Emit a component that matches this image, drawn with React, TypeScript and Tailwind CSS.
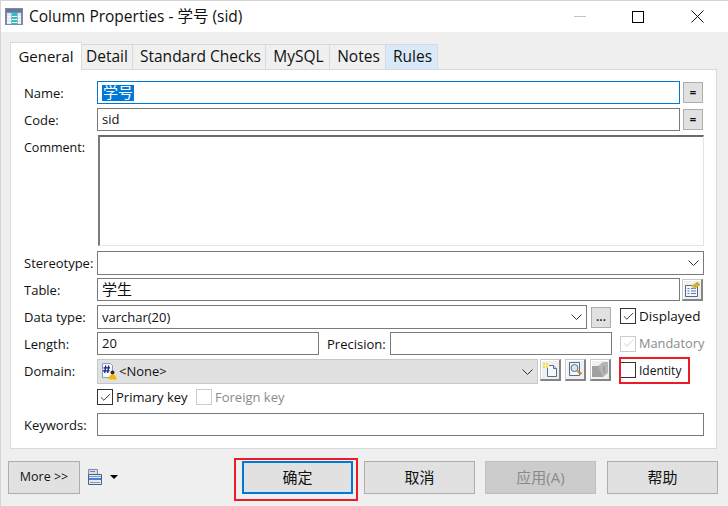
import type { ReactNode } from 'react'
import { Check } from 'lucide-react'

const tabs = [
  { label: 'Detail', w: 'w-[51px]', bg: 'bg-[#f0f0f0]', pad: '' },
  { label: 'Standard Checks', w: 'w-[133px]', bg: 'bg-[#f0f0f0]', pad: 'pl-[3px]' },
  { label: 'MySQL', w: 'w-[64px]', bg: 'bg-[#f0f0f0]', pad: 'pl-[2px]' },
  { label: 'Notes', w: 'w-[56px]', bg: 'bg-[#f0f0f0]', pad: 'pl-[2px]' },
  { label: 'Rules', w: 'w-[52px]', bg: 'bg-[#d8e9f9]', pad: 'pl-[2px]' },
]

function Chevron() {
  return (
    <svg width="11" height="6" viewBox="0 0 11 6" className="shrink-0">
      <path d="M0.500 0.500l5 5 5-5" fill="none" stroke="#333" />
    </svg>
  )
}

function Row({ label, top, h, children }: { label: string; top: string; h: string; children: ReactNode }) {
  return (
    <div className={`flex items-center ${top} ${h}`}>
      <div className={`w-[73px] shrink-0 text-[13px] text-[#111] ${h === 'h-[23px]' ? 'pt-[2px]' : ''}`}>{label}</div>
      {children}
    </div>
  )
}

function Field({ className, children, focused = false }: { className: string; children?: ReactNode; focused?: boolean }) {
  return (
    <div
      className={`flex items-center border bg-white pl-[4px] text-[13px] text-[#111] ${
        focused ? 'border-[#0078d7]' : 'border-[#7a7a7a]'
      } ${className}`}
    >
      {children}
    </div>
  )
}

function SmallButton({ children, className = '' }: { children: ReactNode; className?: string }) {
  return (
    <div className={`flex items-center justify-center border border-[#adadad] bg-[#e1e1e1] text-[12px] font-semibold leading-none text-[#111] ${className}`}>
      {children}
    </div>
  )
}

function ToolButton({ children, className = '' }: { children: ReactNode; className?: string }) {
  return (
    <div
      className={`flex h-[22px] w-[21px] items-center justify-center border-t border-l border-[#c9c9c9] border-r-2 border-b-2 border-r-[#858585] border-b-[#858585] bg-[#f0f0f0] shadow-[inset_1px_1px_0_#ffffff] ${className}`}
    >
      {children}
    </div>
  )
}

function CheckBox({ label, checked = false, disabled = false, className = '', textClass = 'text-[13px]' }: { label: string; checked?: boolean; disabled?: boolean; className?: string; textClass?: string }) {
  return (
    <div className={`flex items-center gap-[3px] ${className}`}>
      <div className={`flex h-[16px] w-[16px] items-center justify-center border bg-white ${disabled ? 'border-[#cccccc]' : 'border-[#333333]'}`}>
        {checked && <Check size={13} strokeWidth={1.6} className={disabled ? 'text-[#cccccc]' : 'text-[#222]'} />}
      </div>
      <span className={`${textClass} ${disabled ? 'text-[#8a8a8a]' : 'text-[#111]'}`}>{label}</span>
    </div>
  )
}

function DialogButton({ children, className = '', variant = 'normal' }: { children: ReactNode; className?: string; variant?: 'normal' | 'disabled' | 'default' }) {
  const look =
    variant === 'disabled'
      ? 'border border-[#bfbfbf] bg-[#cccccc] text-[#8a8a8a]'
      : variant === 'default'
        ? 'border-2 border-[#0078d7] bg-[#e1e1e1] text-[#111]'
        : 'border border-[#adadad] bg-[#e1e1e1] text-[#111]'
  return <div className={`flex h-[33px] items-center justify-center ${look} ${className}`}>{children}</div>
}

function TableIcon() {
  return (
    <svg width="18" height="17" viewBox="0 0 18 17" className="shrink-0">
      <rect x="0" y="0" width="18" height="17" fill="#7d8aa6" />
      <rect x="1" y="1" width="16" height="3" fill="#66769c" />
      <rect x="2" y="5" width="14" height="11" fill="#dfe7f2" />
      <rect x="7" y="5" width="5" height="11" fill="#22c4cc" />
      <path d="M2 8.500h14M2 11.500h14M2 14.500h14" stroke="#ffffff" />
      <path d="M6.500 5v11M12.500 5v11" stroke="#a9b6cc" />
    </svg>
  )
}

function DomainIcon() {
  return (
    <svg width="16" height="17" viewBox="0 0 16 17" className="shrink-0">
      <path d="M1.500 0.500h8l2 2v12h-10z" fill="#f7f9fd" stroke="#8d9bb8" />
      <path d="M4.700 2.500l-1 7.500M7.700 2.500l-1 7.500M2.500 4.800h6.500M2 7.800h6.500" stroke="#14238f" strokeWidth="1.300" fill="none" />
      <circle cx="11.500" cy="9.500" r="2" fill="#2b2b2b" />
      <path d="M7.500 16.500c0-3 1.500-5 4-5s4 2 4 5z" fill="#f6b800" />
    </svg>
  )
}

function PropertiesIcon() {
  return (
    <svg width="17" height="16" viewBox="0 0 17 16">
      <path d="M1.500 4.500h12v11h-12z" fill="#f4f6fa" stroke="#4f6a8f" />
      <path d="M3.500 7.500h2M7 7.500h5M3.500 10h2M7 10h5M3.500 12.500h2M7 12.500h5" stroke="#5b7fb0" />
      <path d="M7 5l6.500-4.500 3 3L10 8z" fill="#e7b93a" />
      <path d="M10 3.500l3 3M12.500 2l2.500 2.500" stroke="#5f9a3a" />
    </svg>
  )
}

function NewIcon() {
  return (
    <svg width="17" height="16" viewBox="0 0 17 16">
      <path d="M5.500 3.500h6l3 3v8h-9z" fill="#f5f8fc" stroke="#55708f" />
      <path d="M11.500 3.500v3h3" fill="#dbe5f0" stroke="#55708f" />
      <rect x="1" y="1" width="5" height="5" fill="#f3d65b" />
      <path d="M3.500 0v7M0 3.500h7" stroke="#fff3b0" />
    </svg>
  )
}

function SearchDocIcon() {
  return (
    <svg width="17" height="17" viewBox="0 0 17 17">
      <path d="M2.500 1.500h10v13h-10z" fill="#f4f7fb" stroke="#55708f" />
      <circle cx="7.500" cy="7" r="3.500" fill="#d9e6f4" stroke="#5c6f85" />
      <path d="M10.500 10l4 3" stroke="#c98a3a" strokeWidth="2.200" />
    </svg>
  )
}

function DisabledDocIcon() {
  return (
    <svg width="16" height="15" viewBox="0 0 16 15">
      <path d="M0 4h11v11H0z" fill="#a0a0a0" />
      <path d="M6 4l5-4h5v11l-5 4z" fill="#b4b4b4" />
      <path d="M11 4h2v7h-2z" fill="#a0a0a0" />
    </svg>
  )
}

function ListIcon() {
  return (
    <svg width="15" height="16" viewBox="0 0 15 16">
      <path d="M0.500 0.500h9v5h-9z" fill="#d9dee8" stroke="#7d8aa6" />
      <path d="M0.500 5.500h13v10h-13z" fill="#e6e9f0" stroke="#4e5f86" />
      <path d="M2 2.500h5" stroke="#6f7f9f" />
      <path d="M1 7.500h12" stroke="#8a98b8" />
      <rect x="1" y="9" width="12" height="2" fill="#4f7ae0" />
      <path d="M2 13.500h10" stroke="#8a98b8" />
    </svg>
  )
}

export default function App() {
  return (
    <div className="flex h-[506px] w-[728px] flex-col overflow-hidden border-l border-t border-[#d4d4d4] bg-[#efefef] font-['Open_Sans','Noto_Sans_CJK_SC',sans-serif] leading-none">
      {/* Title bar */}
      <div className="flex h-[31px] shrink-0 items-center bg-white pl-[4px]">
        <TableIcon />
        <span className="ml-[6px] text-[15.500px] text-[#111]">Column Properties - 学号 (sid)</span>
        <div className="ml-auto flex items-center pr-[12px]">
          <div className="mr-[46px] h-px w-[12px] bg-[#c4c4c4]" />
          <div className="mr-[47px] h-[12px] w-[12px] border border-black" />
          <svg width="13" height="13" viewBox="0 0 13 13" className="mr-[12px]">
            <path d="M0.500 0.500l12 12M12.500 0.500l-12 12" stroke="#111" fill="none" />
          </svg>
        </div>
      </div>

      {/* Tabs */}
      <div className="mt-[10px] flex h-[27px] shrink-0 items-end pl-[9px]">
        <div className="relative z-10 -mb-px flex h-[28px] w-[72px] items-center justify-center border border-b-0 border-[#d9d9d9] bg-white text-[15px] text-[#111]">
          General
        </div>
        {tabs.map((t) => (
          <div key={t.label} className={`flex h-[25px] items-center justify-center border-t border-r border-[#d9d9d9] text-[15.500px] text-[#111] ${t.w} ${t.bg} ${t.pad}`}>
            {t.label}
          </div>
        ))}
      </div>

      {/* General tab panel */}
      <div className="ml-[9px] h-[380px] w-[707px] shrink-0 border border-[#d9d9d9] bg-white pl-[13px] pt-[11px]">
        <Row label="Name:" top="" h="h-[23px]">
          <Field focused className="h-[23px] w-[583px]">
            <span className="flex h-[16px] items-center bg-[#0078d7] px-[1px] text-[15px] text-white">学号</span>
          </Field>
          <SmallButton className="ml-[3px] h-[21px] w-[20px]">=</SmallButton>
        </Row>
        <Row label="Code:" top="mt-[4px]" h="h-[23px]">
          <Field className="h-[23px] w-[583px]">sid</Field>
          <SmallButton className="ml-[3px] h-[21px] w-[20px]">=</SmallButton>
        </Row>
        <div className="mt-[4px] flex h-[111px]">
          <div className="w-[73px] shrink-0 pt-[7px] text-[12.500px] text-[#111]">Comment:</div>
          <div className="ml-px h-[111px] w-[606px] border-2 border-b border-r border-[#e3e3e3] border-l-[#7a7a7a] border-t-[#6a6a6a] bg-white" />
        </div>
        <Row label="Stereotype:" top="mt-[5px]" h="h-[24px]">
          <Field className="h-[24px] w-[607px] justify-end pr-[4px]">
            <Chevron />
          </Field>
        </Row>
        <Row label="Table:" top="mt-[3px]" h="h-[23px]">
          <Field className="h-[23px] w-[583px] text-[15px]">学生</Field>
          <ToolButton className="ml-[2px]">
            <PropertiesIcon />
          </ToolButton>
        </Row>
        <Row label="Data type:" top="mt-[4px]" h="h-[24px]">
          <Field className="h-[24px] w-[490px] justify-between pr-[4px]">
            <span>varchar(20)</span>
            <Chevron />
          </Field>
          <SmallButton className="ml-[4px] h-[21px] w-[20px] items-end pb-[4px]">...</SmallButton>
          <CheckBox checked label="Displayed" className="-mt-[2px] ml-[9px]" textClass="pt-px text-[13.500px]" />
        </Row>
        <Row label="Length:" top="mt-[3px]" h="h-[23px]">
          <Field className="h-[23px] w-[222px]">20</Field>
          <div className="ml-[8px] w-[63px] pt-[2px] text-[13px] text-[#111]">Precision:</div>
          <Field className="h-[23px] w-[222px]" />
          <CheckBox checked disabled label="Mandatory" className="ml-[8px]" textClass="text-[12.800px]" />
        </Row>
        <Row label="Domain:" top="mt-[4px]" h="h-[25px]">
          <div className="flex h-[25px] w-[441px] items-center justify-between border border-[#c8c8c8] bg-[#e1e1e1] pl-[3px] pr-[4px] text-[13px] text-[#111]">
            <span className="flex items-center gap-[2px]">
              <DomainIcon />
              &lt;None&gt;
            </span>
            <Chevron />
          </div>
          <div className="ml-[2px] flex h-[25px] gap-[4px]">
            <ToolButton><NewIcon /></ToolButton>
            <ToolButton><SearchDocIcon /></ToolButton>
            <ToolButton><DisabledDocIcon /></ToolButton>
          </div>
          <div className="relative -mt-[3px] ml-[9px]">
            <CheckBox label="Identity" textClass="pt-px text-[12px]" />
            <div className="absolute -left-[1px] -top-[5px] h-[27px] w-[71px] border-2 border-[#ec1c24]" />
          </div>
        </Row>
        <div className="mt-[5px] flex h-[16px] pl-[73px]">
          <CheckBox checked label="Primary key" className="w-[99px]" />
          <CheckBox disabled label="Foreign key" />
        </div>
        <Row label="Keywords:" top="mt-[8px]" h="h-[23px]">
          <Field className="h-[23px] w-[607px]" />
        </Row>
      </div>

      {/* Bottom buttons */}
      <div className="flex items-start pl-[7px] pt-[12px]">
        <DialogButton className="w-[72px] text-[12.500px]">More &gt;&gt;</DialogButton>
        <div className="ml-[8px] mt-[8px]">
          <ListIcon />
        </div>
        <div className="ml-[7px] mt-[14px] h-0 w-0 border-x-[4px] border-t-[4px] border-x-transparent border-t-black" />
        <div className="relative ml-[124px]">
          <DialogButton variant="default" className="w-[111px] text-[15px]">确定</DialogButton>
          <div className="absolute -left-[8px] -top-[3px] h-[43px] w-[124px] border-2 border-[#ec1c24]" />
        </div>
        <DialogButton className="ml-[11px] w-[111px] text-[15px]">取消</DialogButton>
        <DialogButton variant="disabled" className="ml-[10px] w-[111px] text-[15px]">应用(A)</DialogButton>
        <DialogButton className="ml-[11px] w-[111px] text-[15px]">帮助</DialogButton>
      </div>
    </div>
  )
}
